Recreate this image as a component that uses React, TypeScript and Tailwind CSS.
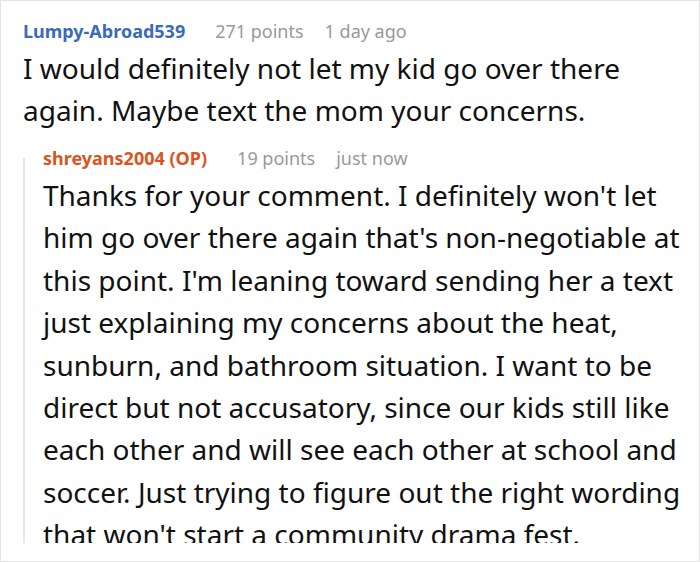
import React from 'react';

const font = { fontFamily: '"Noto Sans", "Open Sans", sans-serif' };

const CommentHeader: React.FC<{ name: string; points: string; time: string; nameClass: string }> = ({ name, points, time, nameClass }) => (
  <div className="flex items-center text-[18px] leading-[24px]">
    <span className={`font-bold mr-[30px] ${nameClass}`}>{name}</span>
    <span className="text-[#999999] mr-[21px]">{points}</span>
    <span className="text-[#999999]">{time}</span>
  </div>
);

export default function App() {
  return (
    <div style={font} className="w-[700px] h-[562px] bg-white border border-[#e3e3e3] pb-[18px] box-border">
      <div className="h-full overflow-hidden pl-[22px] pt-[18px] text-[#111111]">
        <CommentHeader name="Lumpy-Abroad539" points="271 points" time="1 day ago" nameClass="text-[#3b6bb8]" />
        <p className="text-[28px] leading-[42px] mt-[4px] w-[650px]">
          I would definitely not let my kid go over there again. Maybe text the mom your concerns.
        </p>
        <div className="flex mt-[15px]">
          <div className="w-[2px] bg-[#e6e6e6] mt-[12px] shrink-0" />
          <div className="pl-[18px]">
            <CommentHeader name="shreyans2004 (OP)" points="19 points" time="just now" nameClass="text-[#d95420]" />
            <p className="text-[28px] leading-[42.4px] mt-[4px] w-[645px]">
              Thanks for your comment. I definitely won't let him go over there again that's non-negotiable at this point. I'm leaning toward sending her a text just explaining my concerns about the heat, sunburn, and bathroom situation. I want to be direct but not accusatory, since our kids still like each other and will see each other at school and soccer. Just trying to figure out the right wording that won't start a community drama fest.
            </p>
          </div>
        </div>
      </div>
    </div>
  );
}
